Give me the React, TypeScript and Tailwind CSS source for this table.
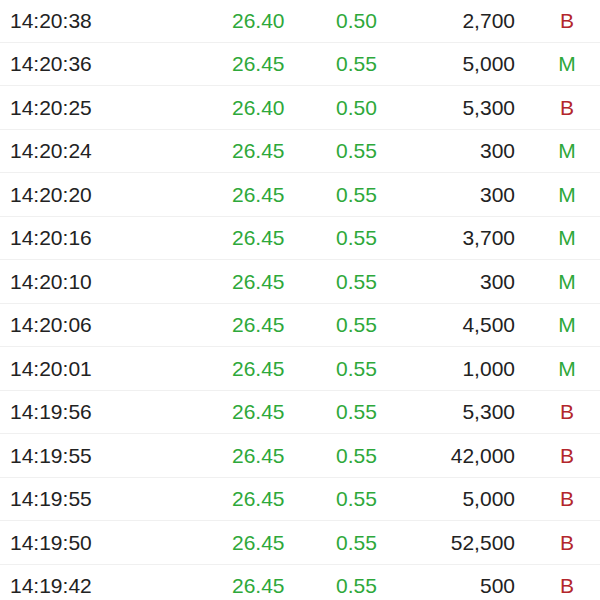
import React from 'react';

type Trade = {
  time: string;
  price: string;
  change: string;
  volume: string;
  side: 'B' | 'M';
};

const trades: Trade[] = [
  { time: '14:20:38', price: '26.40', change: '0.50', volume: '2,700', side: 'B' },
  { time: '14:20:36', price: '26.45', change: '0.55', volume: '5,000', side: 'M' },
  { time: '14:20:25', price: '26.40', change: '0.50', volume: '5,300', side: 'B' },
  { time: '14:20:24', price: '26.45', change: '0.55', volume: '300', side: 'M' },
  { time: '14:20:20', price: '26.45', change: '0.55', volume: '300', side: 'M' },
  { time: '14:20:16', price: '26.45', change: '0.55', volume: '3,700', side: 'M' },
  { time: '14:20:10', price: '26.45', change: '0.55', volume: '300', side: 'M' },
  { time: '14:20:06', price: '26.45', change: '0.55', volume: '4,500', side: 'M' },
  { time: '14:20:01', price: '26.45', change: '0.55', volume: '1,000', side: 'M' },
  { time: '14:19:56', price: '26.45', change: '0.55', volume: '5,300', side: 'B' },
  { time: '14:19:55', price: '26.45', change: '0.55', volume: '42,000', side: 'B' },
  { time: '14:19:55', price: '26.45', change: '0.55', volume: '5,000', side: 'B' },
  { time: '14:19:50', price: '26.45', change: '0.55', volume: '52,500', side: 'B' },
  { time: '14:19:42', price: '26.45', change: '0.55', volume: '500', side: 'B' },
];

const App: React.FC = () => {
  return (
    <div className="w-[600px] h-[600px] overflow-hidden bg-white font-['Liberation_Sans',Arial,sans-serif] text-[21px] text-[#222]">
      <div className="-mt-[1px]">
        {trades.map((t, i) => (
          <div
            key={i}
            className="flex items-center h-[43.5px] border-b border-[#f0f0f0]"
          >
            <span className="shrink-0 w-[232px] pl-[10px]">{t.time}</span>
            <span className="shrink-0 w-[104px] text-[#2ea83a]">{t.price}</span>
            <span className="shrink-0 w-[80px] text-[#2ea83a]">{t.change}</span>
            <span className="shrink-0 w-[99px] text-right">{t.volume}</span>
            <span
              className={
                t.side === 'B'
                  ? 'shrink-0 w-[54px] ml-[25px] text-center text-[#b3262c]'
                  : 'shrink-0 w-[54px] ml-[25px] text-center text-[#2ea83a]'
              }
            >
              {t.side}
            </span>
          </div>
        ))}
      </div>
    </div>
  );
};

export default App;
